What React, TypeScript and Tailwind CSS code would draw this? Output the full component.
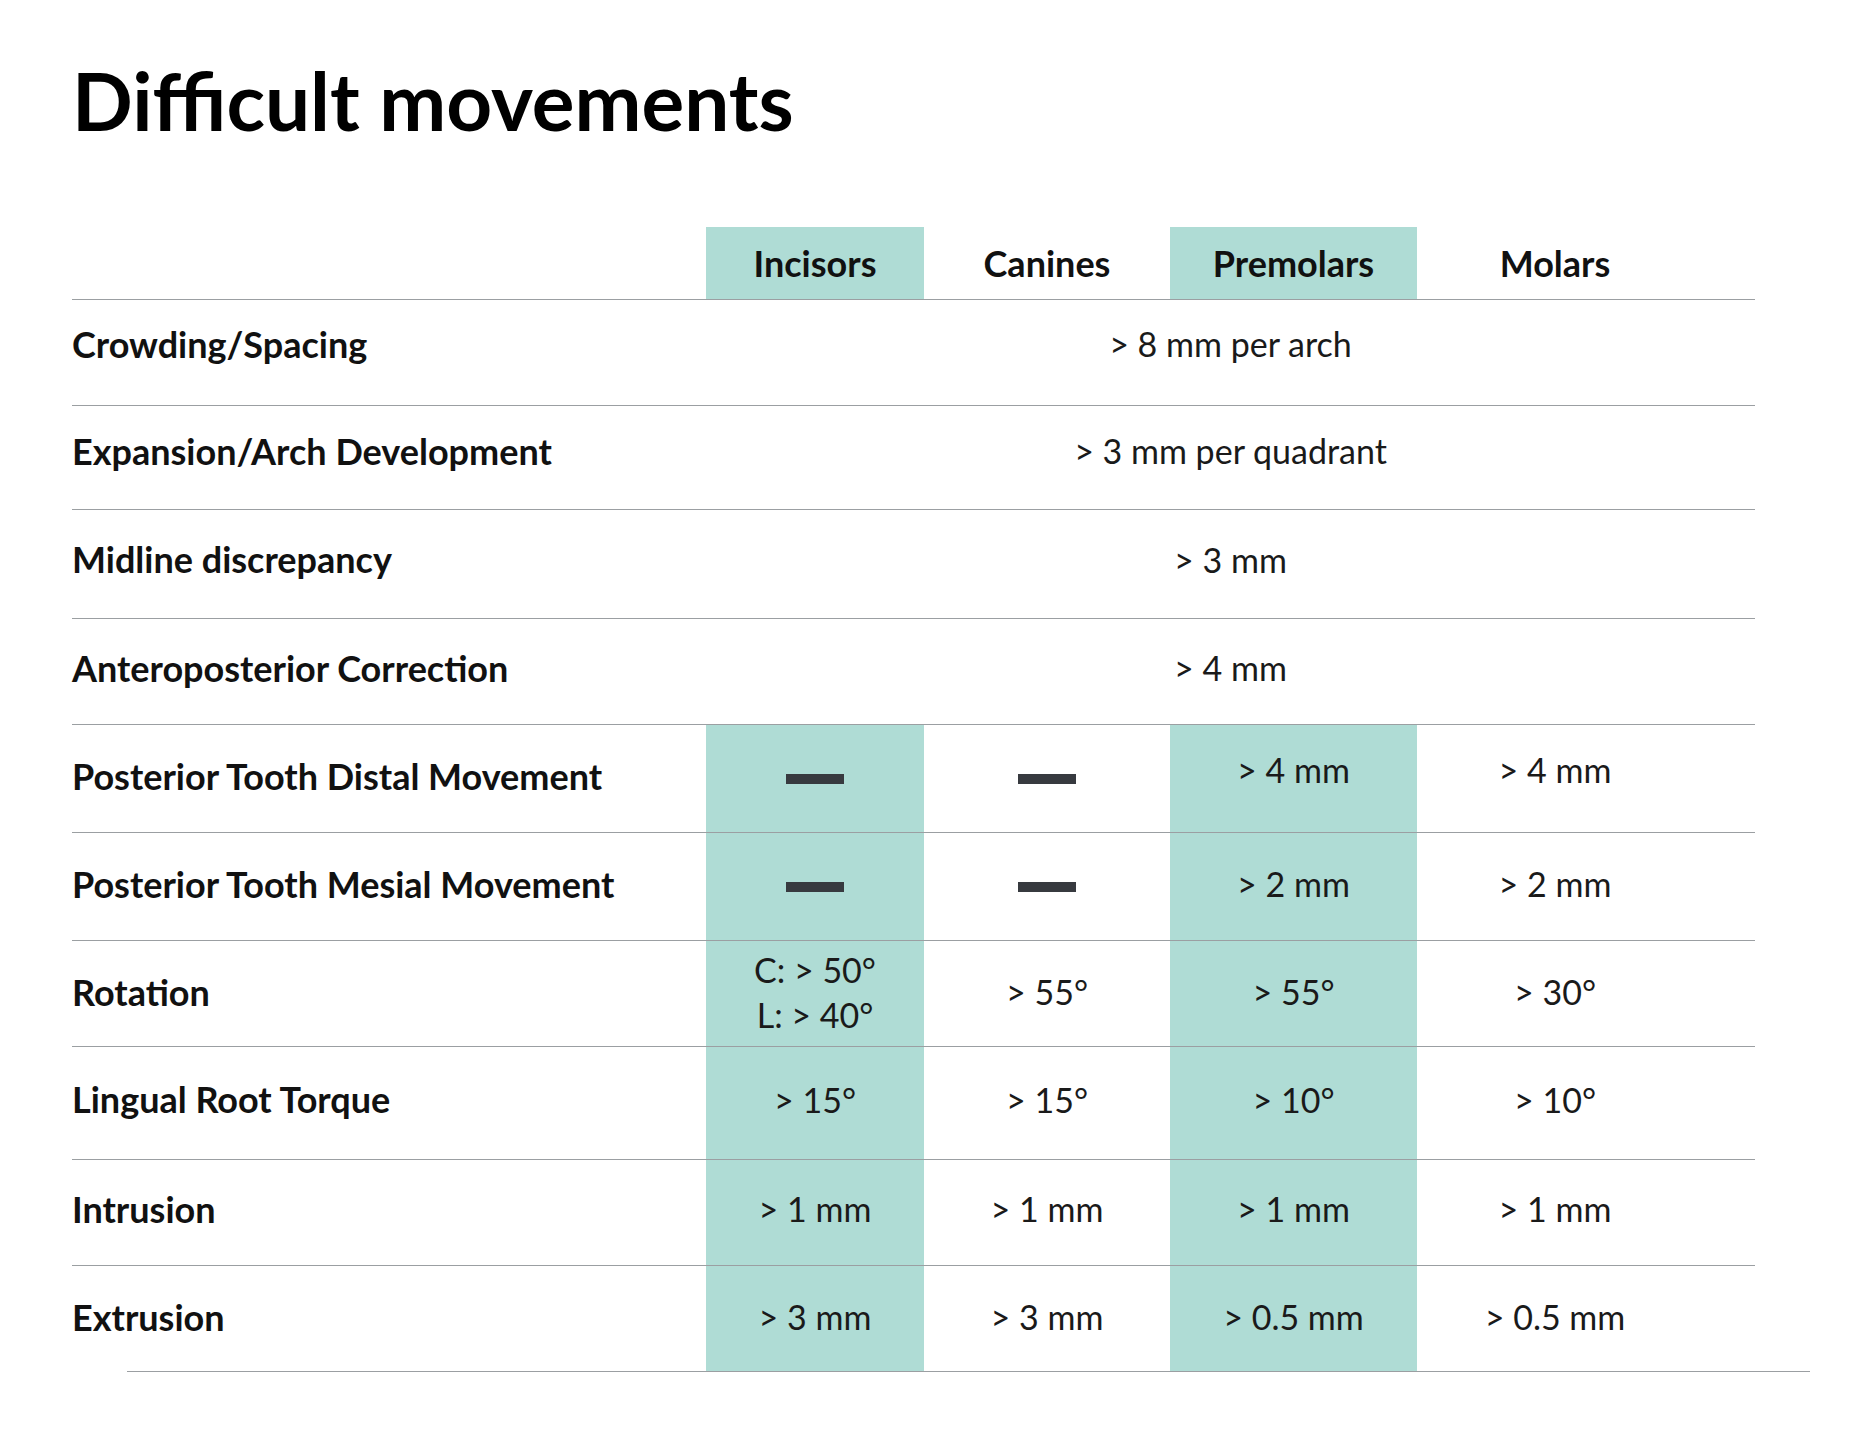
import React from 'react';

// --- DATA ---
type Cell = string | string[] | null; // null = dash (not applicable)

type Row = {
  label: string;
  h: string;
  pad: string; // small nudge so text sits where the print has it
  valPad?: string;
  span?: string;
  cells?: Cell[];
};

const columns = [
  { name: 'Incisors', teal: true, w: 'w-[218px]' },
  { name: 'Canines', teal: false, w: 'w-[246px]' },
  { name: 'Premolars', teal: true, w: 'w-[247px]' },
  { name: 'Molars', teal: false, w: 'flex-1 pr-[62px]' },
];

const rows: Row[] = [
  { label: 'Crowding/Spacing', h: 'h-[106px]', pad: 'pb-[18px]', span: '> 8 mm per arch' },
  { label: 'Expansion/Arch Development', h: 'h-[104px]', pad: 'pb-[14px]', span: '> 3 mm per quadrant' },
  { label: 'Midline discrepancy', h: 'h-[109px]', pad: 'pb-[10px]', span: '> 3 mm' },
  { label: 'Anteroposterior Correction', h: 'h-[106px]', pad: 'pb-[8px]', span: '> 4 mm' },
  { label: 'Posterior Tooth Distal Movement', h: 'h-[108px]', pad: 'pb-[6px]', valPad: 'pb-[18px]', cells: [null, null, '> 4 mm', '> 4 mm'] },
  { label: 'Posterior Tooth Mesial Movement', h: 'h-[108px]', pad: 'pb-[6px]', cells: [null, null, '> 2 mm', '> 2 mm'] },
  { label: 'Rotation', h: 'h-[106px]', pad: 'pb-[4px]', cells: [['C: > 50°', 'L: > 40°'], '> 55°', '> 55°', '> 30°'] },
  { label: 'Lingual Root Torque', h: 'h-[113px]', pad: 'pb-[8px]', cells: ['> 15°', '> 15°', '> 10°', '> 10°'] },
  { label: 'Intrusion', h: 'h-[106px]', pad: 'pb-[8px]', cells: ['> 1 mm', '> 1 mm', '> 1 mm', '> 1 mm'] },
  { label: 'Extrusion', h: 'h-[105px]', pad: 'pb-[4px]', cells: ['> 3 mm', '> 3 mm', '> 0.5 mm', '> 0.5 mm'] },
];

// --- COMPONENTS ---

const Value = ({ cell }: { cell: Cell }) => {
  if (cell === null) {
    return <span className="block w-[58px] h-[10px] bg-[#373a3f]" />;
  }
  if (Array.isArray(cell)) {
    return (
      <div className="flex flex-col items-center leading-[45px]">
        {cell.map((line) => (
          <span key={line}>{line}</span>
        ))}
      </div>
    );
  }
  return <span>{cell}</span>;
};

const TableRow = ({ row, last }: { row: Row; last: boolean }) => (
  <div className={`flex ${row.h} ${last ? '' : 'border-b border-[#9b9fa2]'}`}>
    <div className={`w-[634px] flex items-center text-[36px] font-bold text-[#111] ${row.pad}`}>
      {row.label}
    </div>
    {row.span ? (
      <div className={`flex-1 flex items-center justify-center text-[34px] text-[#1a1a1a] ${row.pad}`}>
        {row.span}
      </div>
    ) : (
      row.cells!.map((cell, i) => (
        <div
          key={i}
          className={`${columns[i].w} ${columns[i].teal ? 'bg-[#afdcd5]' : ''} flex items-center justify-center text-[34px] text-[#1a1a1a] ${
            cell !== null && row.valPad ? row.valPad : cell !== null ? row.pad : ''
          }`}
        >
          <Value cell={cell} />
        </div>
      ))
    )}
  </div>
);

// --- MAIN ---
const App = () => {
  return (
    <div className="w-[1859px] min-h-[1451px] bg-white pl-[72px] pt-[60px] font-['Lato','Open_Sans',sans-serif]">
      <h1 className="text-[80px] leading-none font-bold text-black">Difficult movements</h1>

      <div className="mt-[87px] w-[1683px]">
        {/* Header */}
        <div className="flex h-[73px] border-b border-[#9b9fa2]">
          <div className="w-[634px]" />
          {columns.map((col) => (
            <div
              key={col.name}
              className={`${col.w} ${col.teal ? 'bg-[#afdcd5]' : ''} flex items-center justify-center text-[36px] font-bold text-[#111]`}
            >
              {col.name}
            </div>
          ))}
        </div>

        {rows.map((row, i) => (
          <TableRow key={row.label} row={row} last={i === rows.length - 1} />
        ))}
      </div>

      {/* bottom rule sits a little offset to the right */}
      <div className="ml-[55px] w-[1683px] h-px bg-[#9b9fa2]" />
    </div>
  );
};

export default App;
